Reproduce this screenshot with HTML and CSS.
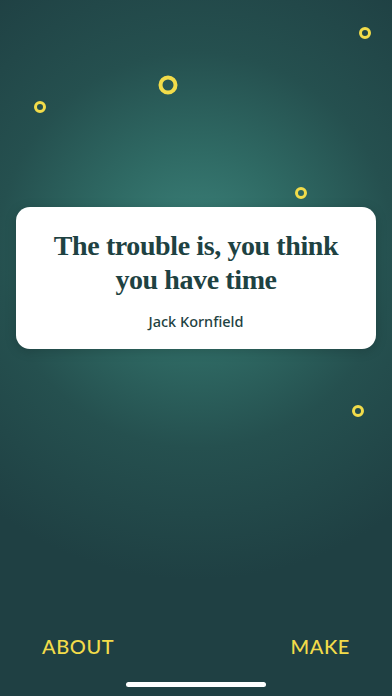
FILE: index.html
```html
<!DOCTYPE html>
<html>
<head>
<meta charset="utf-8">
<link rel="stylesheet" href="styles.css">
</head>
<body>
<div class="screen">
  <div class="dot dot-a"></div>
  <div class="dot dot-b"></div>
  <div class="dot dot-c big"></div>
  <div class="dot dot-d"></div>
  <div class="dot dot-e"></div>
  <main class="stage">
    <div class="card">
      <h1 class="quote">The trouble is, you think you have time</h1>
      <p class="author">Jack Kornfield</p>
    </div>
  </main>
  <nav class="footer">
    <span class="link">ABOUT</span>
    <span class="link">MAKE</span>
  </nav>
  <div class="home-bar"><span class="home-ind"></span></div>
</div>
</body>
</html>
```

FILE: styles.css
```css
html, body {
  margin: 0;
  padding: 0;
}
.screen {
  position: relative;
  width: 392px;
  height: 696px;
  overflow: hidden;
  display: flex;
  flex-direction: column;
  background: radial-gradient(ellipse 330px 330px at 196px 250px, #3c827a 0%, #2f6a64 30%, #25504f 60%, #1f4043 100%);
  background-color: #1f3f42;
}
.dot {
  position: absolute;
  width: 6px;
  height: 6px;
  border: 3px solid #f2dc4a;
  border-radius: 50%;
  box-sizing: content-box;
  transform: translate(-50%, -50%);
}
.dot.big {
  width: 11px;
  height: 11px;
  border-width: 4px;
}
.dot-a { left: 365px; top: 33px; }
.dot-b { left: 40px; top: 107px; }
.dot-c { left: 168px; top: 85px; }
.dot-d { left: 301px; top: 193px; }
.dot-e { left: 358px; top: 411px; }
.stage {
  flex: 1;
  padding: 207px 16px 0;
}
.card {
  background: #ffffff;
  border-radius: 14px;
  height: 142px;
  box-sizing: border-box;
  padding: 22px 30px 0;
  text-align: center;
  box-shadow: 0 2px 12px rgba(0,0,0,0.18);
}
.quote {
  margin: 0;
  font-family: "Liberation Serif", "DejaVu Serif", serif;
  font-weight: bold;
  font-size: 28px;
  line-height: 34px;
  color: #1e4242;
  letter-spacing: -0.4px;
}
.author {
  margin: 14px 0 0;
  font-family: "Noto Sans", "Lato", sans-serif;
  font-size: 14.5px;
  font-weight: 500;
  color: #1e4242;
}
.footer {
  display: flex;
  justify-content: space-between;
  padding: 0 42px 0 42px;
  height: 24px;
  align-items: center;
  margin-bottom: 24px;
}
.link {
  font-family: "Lato", "Noto Sans", sans-serif;
  font-size: 20px;
  font-weight: 500;
  color: #f2dc4a;
  letter-spacing: 0.6px;
}
.home-bar {
  height: 14px;
  display: flex;
  justify-content: center;
}
.home-ind {
  width: 140px;
  height: 5px;
  border-radius: 3px;
  background: #ffffff;
}
```
